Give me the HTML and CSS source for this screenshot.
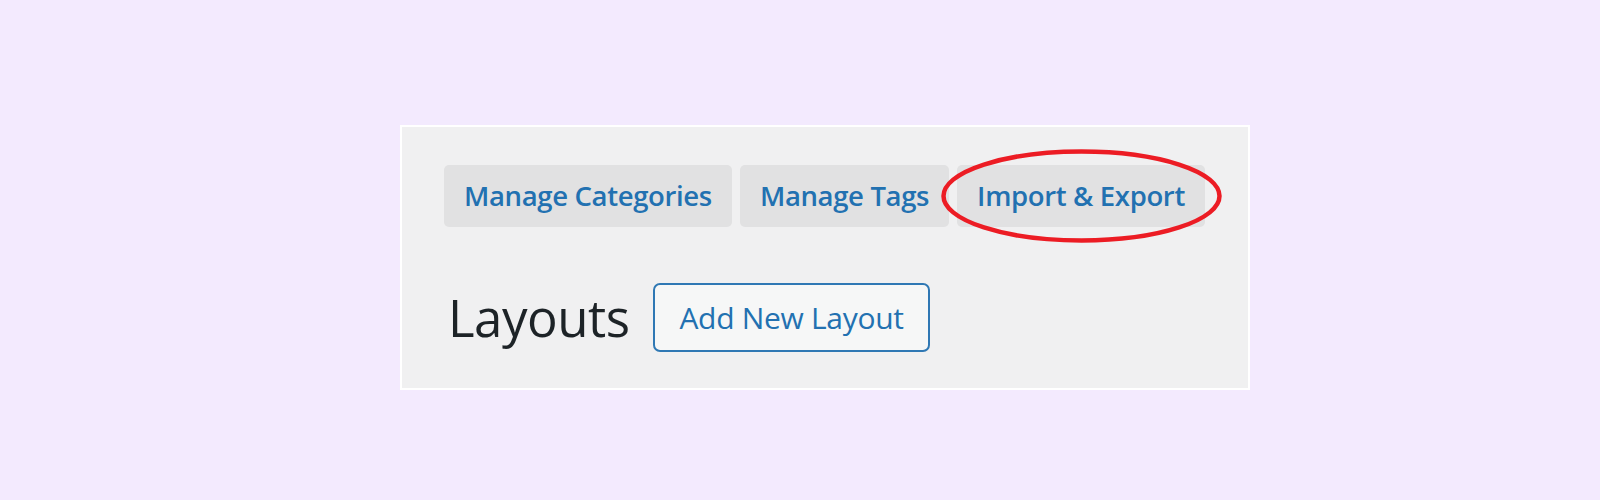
FILE: index.html
```html
<!DOCTYPE html>
<html lang="en">
<head>
<meta charset="utf-8">
<title>Layouts</title>
<link rel="stylesheet" href="styles.css">
</head>
<body>
<div class="panel">
  <nav class="tabs">
    <a class="tab" href="#">Manage Categories</a>
    <a class="tab" href="#">Manage Tags</a>
    <a class="tab tab-marked" href="#">Import &amp; Export
      <svg class="mark" viewBox="0 0 281 94" aria-hidden="true">
        <ellipse cx="140.5" cy="47" rx="138" ry="44.5" fill="none" stroke="#ec1c24" stroke-width="4.5"/>
      </svg>
    </a>
  </nav>
  <div class="title-row">
    <h1 class="title">Layouts</h1>
    <a class="add-btn" href="#">Add New Layout</a>
  </div>
</div>
</body>
</html>
```

FILE: styles.css
```css
html, body {
  margin: 0;
  height: 500px;
  overflow: hidden;
}

body {
  background: #f3eafe;
  padding: 125px 0 0 400px;
  box-sizing: border-box;
  font-family: "Open Sans", "Noto Sans", sans-serif;
}

.panel {
  box-sizing: border-box;
  width: 850px;
  height: 265px;
  background: #f0f0f1;
  border: 2px solid #ffffff;
  padding: 38px 0 0 42px;
}

.tabs {
  display: flex;
  gap: 8px;
}

.tab {
  position: relative;
  display: block;
  height: 62px;
  line-height: 62px;
  padding: 0 20px;
  background: #e1e1e2;
  border-radius: 5px;
  color: #2271b1;
  font-size: 27.5px;
  letter-spacing: -0.35px;
  font-weight: 600;
  text-decoration: none;
  white-space: nowrap;
}

.mark {
  position: absolute;
  left: -16px;
  top: -16px;
  width: 281px;
  height: 94px;
  overflow: visible;
}

.title-row {
  display: flex;
  align-items: center;
  margin-top: 56px;
}

.title {
  margin: 0 24px 0 4px;
  font-size: 51px;
  letter-spacing: -0.5px;
  font-weight: 400;
  line-height: 1;
  color: #1d2327;
}

.add-btn {
  box-sizing: border-box;
  display: block;
  height: 69px;
  line-height: 65px;
  padding: 0 24px;
  border: 2px solid #2f78b4;
  border-radius: 7px;
  background: #f6f7f7;
  color: #2271b1;
  font-size: 30px;
  letter-spacing: -0.3px;
  font-weight: 400;
  text-decoration: none;
  white-space: nowrap;
}
```
